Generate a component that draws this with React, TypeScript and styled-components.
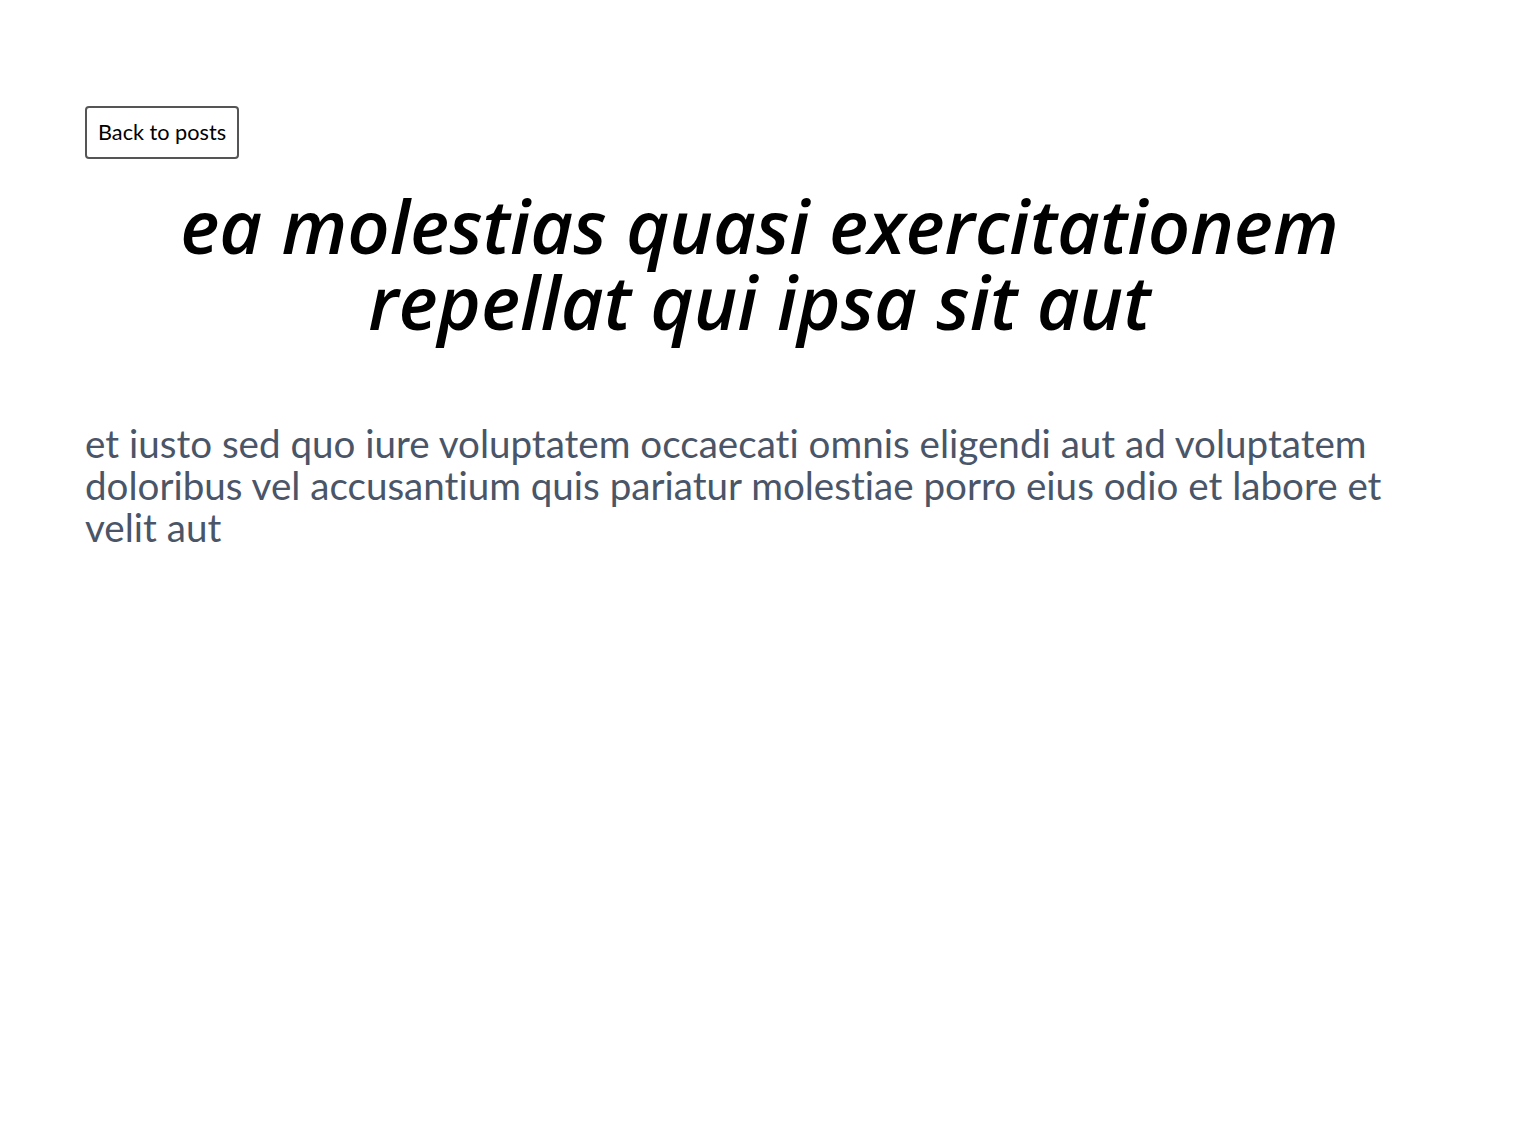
import React from 'react'
import styled, { createGlobalStyle } from 'styled-components'

const GlobalStyle = createGlobalStyle`
  body {
    margin: 0;
    background: #fff;
    font-family: Lato, 'Open Sans', sans-serif;
    font-variant-ligatures: none;
  }
`

const Page = styled.main`
  width: 1349px;
  margin: 0 auto;
  padding-top: 106px;
`

const BackButton = styled.button`
  display: block;
  font-family: inherit;
  font-size: 21.7px;
  line-height: 27px;
  padding: 11px 11px;
  color: #000;
  background: #fff;
  border: 2px solid #555;
  border-radius: 4px;
  cursor: pointer;
`

const Title = styled.h1`
  margin: 29px 0 0;
  text-align: center;
  font-family: 'Open Sans', sans-serif;
  font-size: 74px;
  line-height: 76px;
  font-style: italic;
  font-weight: 600;
  color: #000;
`

const Body = styled.p`
  margin: 82px 0 0;
  font-size: 38.6px;
  line-height: 42px;
  color: #4a5568;
`

export default function App() {
  return (
    <>
      <GlobalStyle />
      <Page>
        <BackButton>Back to posts</BackButton>
        <Title>ea molestias quasi exercitationem repellat qui ipsa sit aut</Title>
        <Body>
          et iusto sed quo iure voluptatem occaecati omnis eligendi aut ad voluptatem doloribus vel
          accusantium quis pariatur molestiae porro eius odio et labore et velit aut
        </Body>
      </Page>
    </>
  )
}
